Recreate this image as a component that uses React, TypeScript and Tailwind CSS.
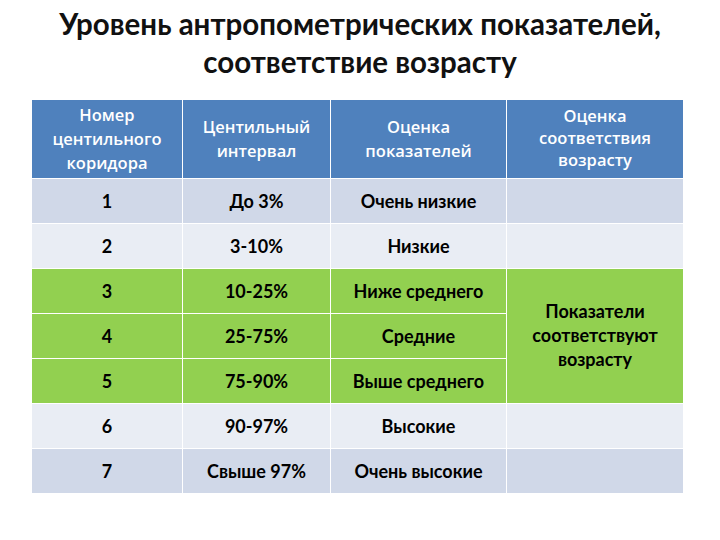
import React from 'react';

type Row = { n: string; range: string; level: string; fit?: boolean; tone: 'dark' | 'light' | 'green' };

const ROWS: Row[] = [
  { n: '1', range: 'До 3%', level: 'Очень низкие', tone: 'dark' },
  { n: '2', range: '3-10%', level: 'Низкие', tone: 'light' },
  { n: '3', range: '10-25%', level: 'Ниже среднего', tone: 'green', fit: true },
  { n: '4', range: '25-75%', level: 'Средние', tone: 'green' },
  { n: '5', range: '75-90%', level: 'Выше среднего', tone: 'green' },
  { n: '6', range: '90-97%', level: 'Высокие', tone: 'light' },
  { n: '7', range: 'Свыше 97%', level: 'Очень высокие', tone: 'dark' },
];

const toneClass = {
  dark: 'bg-[#d0d8e8]',
  light: 'bg-[#e9edf4]',
  green: 'bg-[#92d050]',
};

const HeadCell: React.FC<{ children: React.ReactNode }> = ({ children }) => (
  <div className="bg-[#4f81bd] text-white flex items-center justify-center text-center text-[16.5px] leading-[24px] font-semibold" style={{ fontFamily: '"Open Sans", sans-serif' }}>
    {children}
  </div>
);

export default function App() {
  return (
    <div className="w-[720px] h-[540px] bg-white text-black" style={{ fontFamily: 'Lato, "Open Sans", sans-serif' }}>
      {/* Title */}
      <h1 className="text-center font-bold text-[29.5px] leading-[38px] pt-[5px] text-[#111]">
        Уровень антропометрических показателей,
        <br />
        соответствие возрасту
      </h1>

      {/* Table */}
      <div className="ml-[32px] mt-[19px] w-[651px] grid grid-cols-[150px_147px_175px_176px] grid-rows-[78px_repeat(7,44px)] gap-x-px gap-y-[1px] bg-white">
        <HeadCell>Номер<br />центильного<br />коридора</HeadCell>
        <HeadCell>Центильный<br />интервал</HeadCell>
        <HeadCell>Оценка<br />показателей</HeadCell>
        <div className="bg-[#4f81bd] text-white flex items-start justify-center text-center text-[16.5px] leading-[22px] font-semibold pt-[5px]" style={{ fontFamily: '"Open Sans", sans-serif' }}>
          <span>Оценка<br />соответствия<br />возрасту</span>
        </div>

        {ROWS.map((r) => (
          <React.Fragment key={r.n}>
            <div className={`${toneClass[r.tone]} flex items-center justify-center text-[18px] font-bold`}>{r.n}</div>
            <div className={`${toneClass[r.tone]} flex items-center justify-center text-[18px] font-bold`}>{r.range}</div>
            <div className={`${toneClass[r.tone]} flex items-center justify-center text-[18px] font-bold`}>{r.level}</div>
            {r.tone !== 'green' && <div className={toneClass[r.tone]} />}
            {r.fit && (
              <div className="row-span-3 bg-[#92d050] flex items-center justify-center text-center text-[18px] leading-[24px] font-bold pb-[2px]">
                Показатели<br />соответствуют<br />возрасту
              </div>
            )}
          </React.Fragment>
        ))}
      </div>
    </div>
  );
}
